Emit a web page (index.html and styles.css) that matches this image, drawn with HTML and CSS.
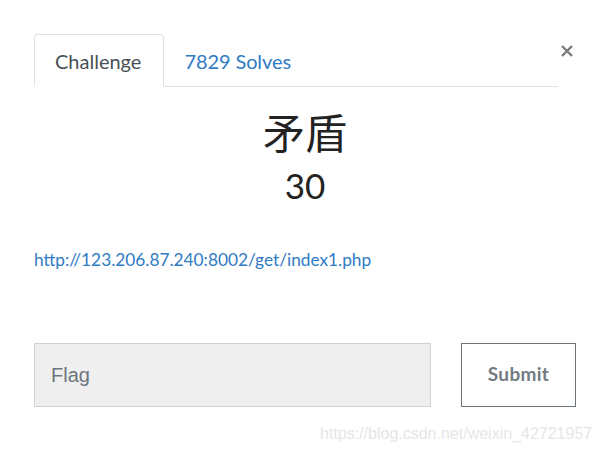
FILE: index.html
```html
<!DOCTYPE html>
<html>
<head>
<meta charset="utf-8">
<link rel="stylesheet" href="styles.css">
</head>
<body>
<div class="modal">
  <div class="tabs-row">
    <ul class="tabs">
      <li class="tab active">Challenge</li>
      <li class="tab link-tab">7829 Solves</li>
    </ul>
  </div>
  <button class="close" aria-label="Close">
    <svg width="14" height="14" viewBox="0 0 14 14"><path d="M2 2L12 12M12 2L2 12" stroke="#7a7a7a" stroke-width="2.4" stroke-linecap="butt"/></svg>
  </button>
  <div class="content">
    <h2 class="title">矛盾</h2>
    <h3 class="value">30</h3>
    <p class="desc"><a href="#">http://123.206.87.240:8002/get/index1.php</a></p>
  </div>
  <form class="flag-form">
    <input class="flag-input" type="text" placeholder="Flag">
    <button class="submit" type="button">Submit</button>
  </form>
  <div class="watermark">https://blog.csdn.net/weixin_42721957</div>
</div>
</body>
</html>
```
FILE: styles.css
```css
html, body {
  margin: 0;
  padding: 0;
  background: #fff;
}
.modal {
  position: relative;
  width: 601px;
  height: 452px;
  box-sizing: border-box;
  padding: 34px 25px 0 34px;
  font-family: Lato, "Noto Sans CJK SC", sans-serif;
}
.tabs-row {
  padding-right: 18px;
}
.tabs {
  list-style: none;
  margin: 0;
  padding: 0;
  display: flex;
  border-bottom: 1px solid #dee2e6;
  height: 52px;
}
.tab {
  box-sizing: border-box;
  height: 53px;
  padding: 0 20px 0 19px;
  display: flex;
  align-items: center;
  font-size: 20px;
  border: 1px solid transparent;
  border-top-left-radius: 4px;
  border-top-right-radius: 4px;
}
.tab.active {
  padding: 0 22px 0 20px;
  color: #495057;
  background: #fff;
  border-color: #dee2e6 #dee2e6 #fff;
}
.link-tab {
  color: #2f7bc4;
  letter-spacing: -0.1px;
}
.close {
  position: absolute;
  top: 44px;
  right: 27px;
  border: 0;
  background: none;
  padding: 0;
  width: 14px;
  height: 14px;
  cursor: pointer;
}
.close svg { display: block; }
.title {
  margin: 16px 0 0;
  text-align: center;
  font-family: "Noto Sans CJK SC", sans-serif;
  font-weight: 400;
  font-size: 42px;
  line-height: 56px;
  color: #222;
}
.value {
  margin: 2px 0 0;
  text-align: center;
  font-family: Lato, sans-serif;
  font-weight: 400;
  font-size: 35px;
  line-height: 48px;
  color: #222;
}
.desc {
  margin: 39px 0 0;
  font-size: 17.3px;
  line-height: 24px;
}
.desc a {
  color: #2f7bc4;
  text-decoration: none;
}
.flag-form {
  display: flex;
  gap: 30px;
  margin-top: 71px;
}
.flag-input {
  box-sizing: border-box;
  width: 397px;
  height: 64px;
  margin: 0;
  padding: 0 16px;
  background: #efefef;
  border: 1px solid #cfd3d6;
  border-radius: 0;
  font-family: "Liberation Sans", Arial, sans-serif;
  font-size: 20px;
  color: #495057;
  outline: none;
}
.flag-input::placeholder {
  color: #6c757d;
}
.submit {
  box-sizing: border-box;
  width: 115px;
  height: 64px;
  margin: 0;
  padding: 0 0 3px;
  background: #fff;
  border: 1px solid #6c757d;
  border-radius: 0;
  font-family: Lato, sans-serif;
  font-weight: 700;
  font-size: 19px;
  color: #737b83;
  letter-spacing: 0.3px;
}
.watermark {
  position: absolute;
  left: 320px;
  top: 425px;
  font-family: "Liberation Sans", Arial, sans-serif;
  font-size: 16px;
  color: #e6e6e6;
  white-space: nowrap;
}
```
